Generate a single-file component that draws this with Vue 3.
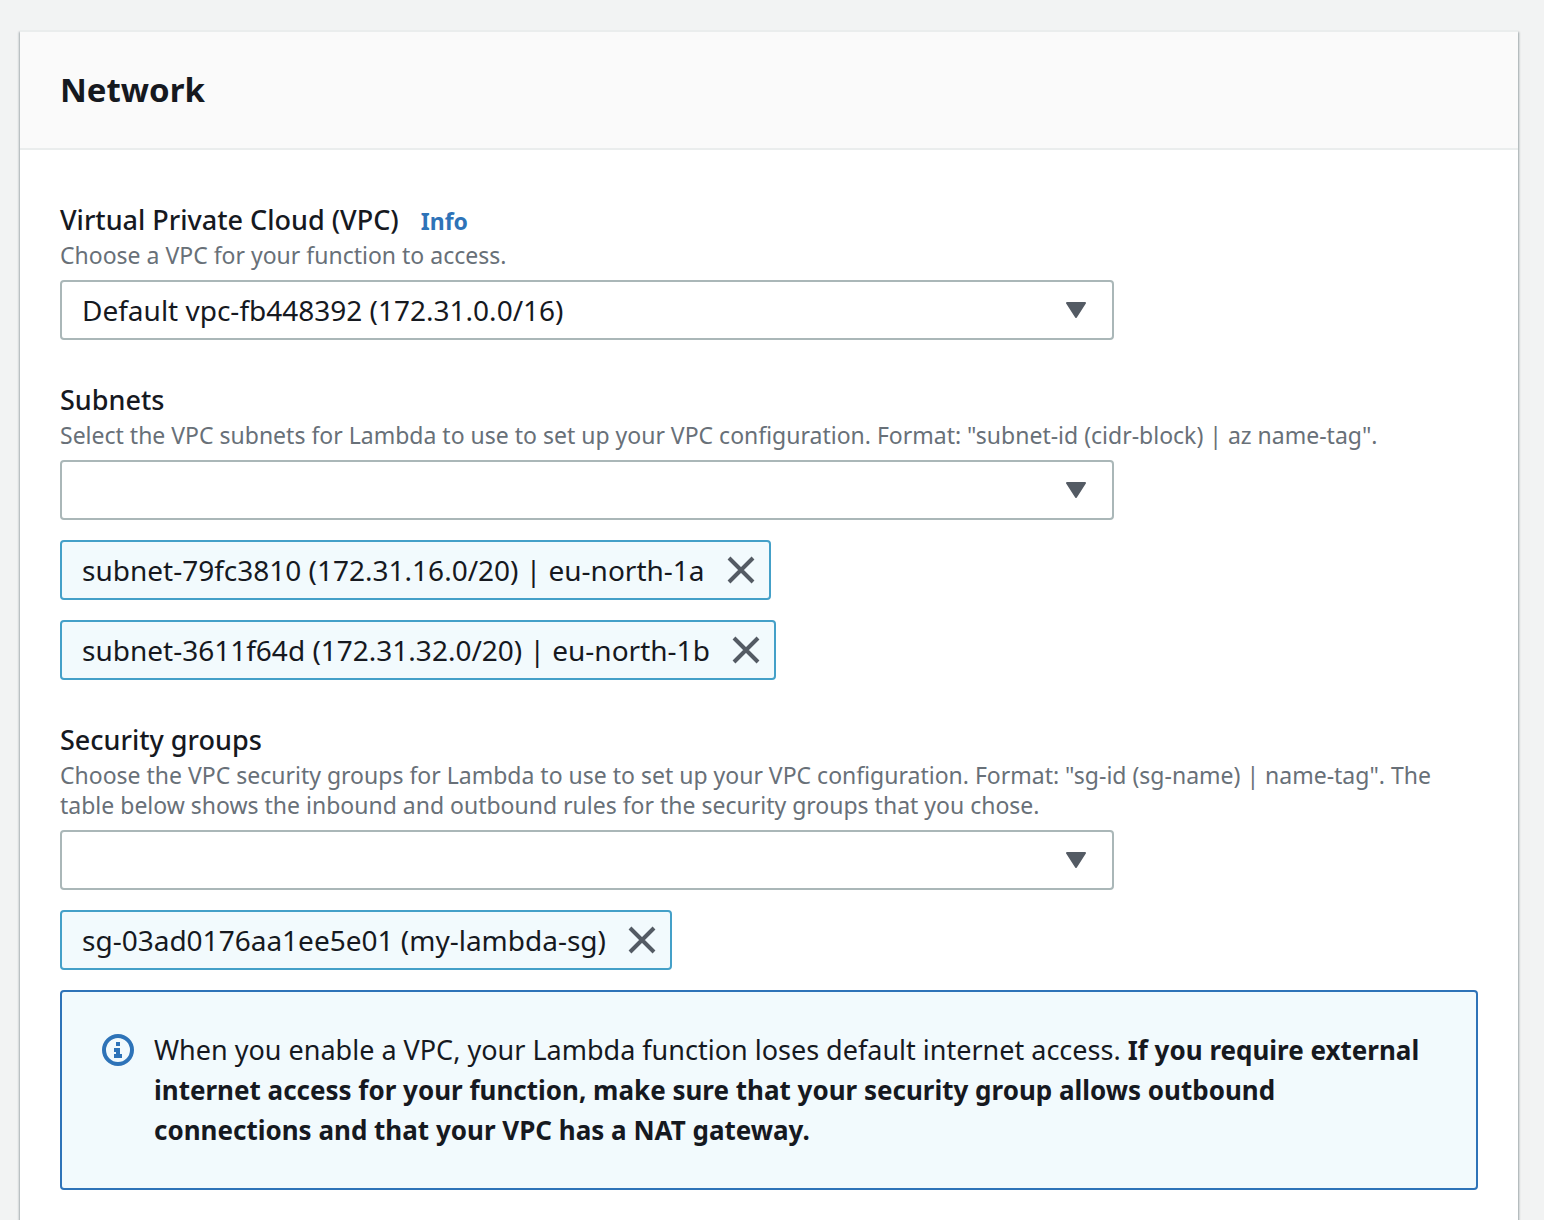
<script setup>
import { ref } from 'vue'

const vpc = ref('vpc-fb448392')
const subnet = ref('')
const group = ref('')

const subnets = ref([
  'subnet-79fc3810 (172.31.16.0/20) | eu-north-1a',
  'subnet-3611f64d (172.31.32.0/20) | eu-north-1b',
])
const groups = ref(['sg-03ad0176aa1ee5e01 (my-lambda-sg)'])
</script>

<template>
  <main class="page">
    <section class="panel" aria-labelledby="network-title">
      <header class="panel-header">
        <h2 id="network-title">Network</h2>
      </header>

      <div class="panel-body">
        <div class="field">
          <div class="label-row">
            <label for="vpc">Virtual Private Cloud (VPC)</label>
            <a class="info" href="#vpc">Info</a>
          </div>
          <p id="vpc-hint" class="hint">Choose a VPC for your function to access.</p>
          <div class="select">
            <select id="vpc" v-model="vpc" aria-describedby="vpc-hint">
              <option value="vpc-fb448392">Default vpc-fb448392 (172.31.0.0/16)</option>
            </select>
            <svg class="caret" viewBox="0 0 20 16" aria-hidden="true">
              <path d="M1 1h18l-9 14z" />
            </svg>
          </div>
        </div>

        <div class="field">
          <div class="label-row">
            <label for="subnets">Subnets</label>
          </div>
          <p id="subnets-hint" class="hint">Select the VPC subnets for Lambda to use to set up your VPC configuration. Format: "subnet-id (cidr-block) | az name-tag".</p>
          <div class="select">
            <select id="subnets" v-model="subnet" aria-describedby="subnets-hint">
              <option value=""></option>
            </select>
            <svg class="caret" viewBox="0 0 20 16" aria-hidden="true">
              <path d="M1 1h18l-9 14z" />
            </svg>
          </div>
          <ul class="tokens">
            <li v-for="(item, i) in subnets" :key="item" class="token">
              <span>{{ item }}</span>
              <button type="button" :aria-label="'Remove ' + item" @click="subnets.splice(i, 1)">
                <svg viewBox="0 0 28 28" aria-hidden="true"><path d="M2 2l24 24M26 2L2 26" /></svg>
              </button>
            </li>
          </ul>
        </div>

        <div class="field">
          <div class="label-row">
            <label for="groups">Security groups</label>
          </div>
          <p id="groups-hint" class="hint">Choose the VPC security groups for Lambda to use to set up your VPC configuration. Format: "sg-id (sg-name) | name-tag". The table below shows the inbound and outbound rules for the security groups that you chose.</p>
          <div class="select">
            <select id="groups" v-model="group" aria-describedby="groups-hint">
              <option value=""></option>
            </select>
            <svg class="caret" viewBox="0 0 20 16" aria-hidden="true">
              <path d="M1 1h18l-9 14z" />
            </svg>
          </div>
          <ul class="tokens">
            <li v-for="(item, i) in groups" :key="item" class="token">
              <span>{{ item }}</span>
              <button type="button" :aria-label="'Remove ' + item" @click="groups.splice(i, 1)">
                <svg viewBox="0 0 28 28" aria-hidden="true"><path d="M2 2l24 24M26 2L2 26" /></svg>
              </button>
            </li>
          </ul>
          <div class="alert" role="note">
            <svg class="alert-icon" viewBox="0 0 32 32" aria-hidden="true">
              <circle cx="16" cy="16" r="14" />
              <path d="M14 8h4v4h-4zM12 14h6v6h2v4h-8v-4h2v-2h-2z" />
            </svg>
            <p>When you enable a VPC, your Lambda function loses default internet access. <strong>If you require external internet access for your function, make sure that your security group allows outbound connections and that your VPC has a NAT gateway.</strong></p>
          </div>
        </div>
      </div>
    </section>
  </main>
</template>

<style>
body {
  background: #f2f3f3;
}
</style>

<style scoped>
.page {
  padding: 30px 26px 0 20px;
  color: #16191f;
  font-family: "Noto Sans", "Open Sans", sans-serif;
  font-size: 27px;
  line-height: 40px;
}
.panel {
  border-top: 2px solid #eaeded;
  background: #fff;
  box-shadow: 1px 2px 2px rgba(0, 28, 36, 0.35), -1px 2px 2px rgba(0, 28, 36, 0.3);
}
.panel-header {
  padding: 38px 40px;
  border-bottom: 2px solid #eaeded;
  background: #fafafa;
}
h2 {
  margin: 0;
  font-size: 33px;
  font-weight: 700;
  line-height: 40px;
}
.panel-body {
  display: flex;
  flex-direction: column;
  gap: 40px;
  padding: 50px 40px;
}
.label-row {
  display: flex;
  align-items: baseline;
  gap: 22px;
  font-weight: 500;
}
.info {
  color: #2e73b8;
  font-size: 23px;
  font-weight: 700;
  line-height: 30px;
  text-decoration: none;
}
.hint {
  margin: 0 0 10px;
  color: #687078;
  font-size: 23px;
  line-height: 30px;
}
.select {
  display: grid;
  align-items: center;
  width: calc(75% - 10px);
}
.select > * {
  grid-area: 1 / 1;
}
select {
  width: 100%;
  height: 60px;
  padding: 0 60px 0 20px;
  border: 2px solid #aab7b8;
  border-radius: 4px;
  background: #fff;
  color: inherit;
  font: inherit;
  font-size: 28px;
  appearance: none;
}
.caret {
  justify-self: end;
  width: 20px;
  height: 16px;
  margin-right: 28px;
  fill: #545b64;
  stroke: #545b64;
  stroke-width: 2;
  stroke-linejoin: round;
  pointer-events: none;
}
.tokens {
  display: flex;
  flex-direction: column;
  align-items: flex-start;
  gap: 20px;
  margin: 20px 0 0;
  padding: 0;
  font-size: 28px;
  list-style: none;
}
.token {
  display: flex;
  align-items: center;
  gap: 22px;
  padding: 8px 14px 8px 20px;
  border: 2px solid #44a0c8;
  border-radius: 4px;
  background: #f2fafd;
}
.token button {
  display: flex;
  padding: 0;
  border: 0;
  background: none;
  cursor: pointer;
}
.token svg {
  width: 28px;
  height: 28px;
  fill: none;
  stroke: #545b64;
  stroke-width: 4;
}
.alert {
  display: flex;
  align-items: flex-start;
  gap: 20px;
  margin-top: 20px;
  padding: 38px 40px;
  border: 2px solid #2e73b8;
  border-radius: 4px;
  background: #f2fafd;
}
.alert p {
  margin: 0;
}
.alert strong {
  font-size: 26px;
  font-weight: 700;
  line-height: 30px;
}
.alert-icon {
  flex: none;
  width: 32px;
  height: 32px;
  margin-top: 4px;
  fill: #2e73b8;
}
.alert-icon circle {
  fill: none;
  stroke: #2e73b8;
  stroke-width: 4;
}
</style>
